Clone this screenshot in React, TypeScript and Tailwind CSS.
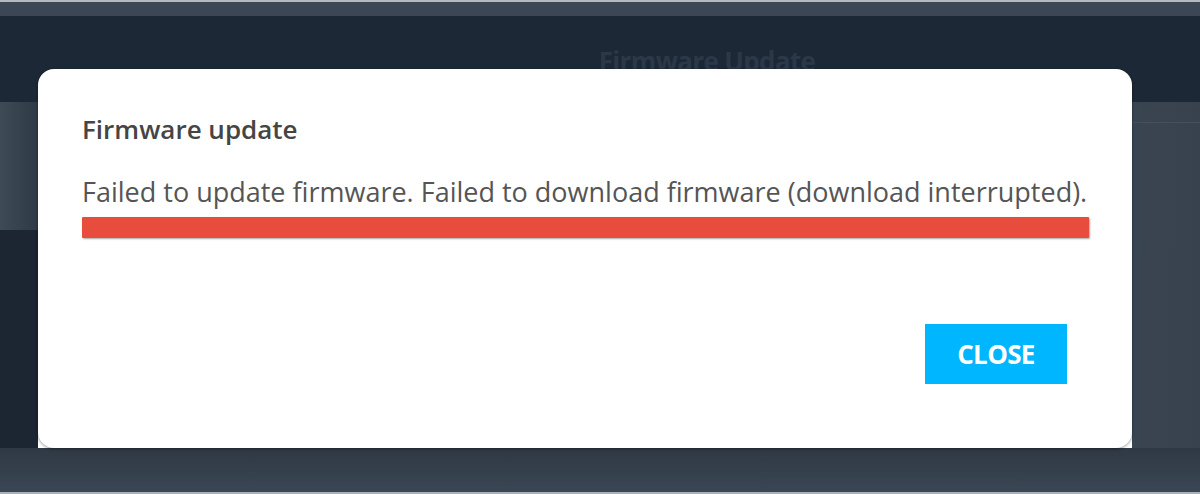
import React from "react";

const font = { fontFamily: '"Open Sans", "Liberation Sans", sans-serif' };

const App: React.FC = () => {
  return (
    <div className="relative w-[1200px] h-[494px] overflow-hidden flex flex-col" style={font}>
      {/* page behind the modal */}
      <div className="h-[2px] bg-[#b3b9c0]" />
      <div className="h-[14px] bg-[#3c4755]" />
      <div className="h-[86px] bg-[#1c2836] flex justify-center">
        <span className="ml-[214px] mt-[26px] text-[26px] font-bold text-[#2b3848] tracking-tight">Firmware Update</span>
      </div>
      <div className="flex-1 flex">
        <div className="w-[38px] flex flex-col">
          <div className="h-[128px] bg-gradient-to-r from-[#3f4a57] to-[#2f3a47]" />
          <div className="flex-1 bg-[#1c2532]" />
        </div>
        <div className="flex-1 bg-white" />
        <div className="w-[68px] flex flex-col bg-gradient-to-r from-[#3a4552] to-[#38424e]">
          <div className="h-[21px] border-b border-[#46505c]" />
        </div>
      </div>
      <div className="h-[44px] bg-gradient-to-b from-[#2f3945] to-[#3b4654]" />
      <div className="h-[2px] bg-[#aab1b8]" />

      {/* modal */}
      <div className="absolute left-[38px] top-[69px] w-[1094px] h-[379px] bg-white rounded-[16px] shadow-[0_1px_3px_rgba(0,0,0,0.4)] flex flex-col pl-[44px] pr-[43px]">
        <h2 className="mt-[45px] text-[26px] leading-[30px] font-semibold text-[#454545]">Firmware update</h2>
        <p className="mt-[32px] text-[27px] leading-[32px] text-[#555555] whitespace-nowrap">
          Failed to update firmware. Failed to download firmware (download interrupted).
        </p>
        <div className="mt-[9px] h-[21px] w-[1007px] bg-[#e74c3c] rounded-[1px] shadow-[1px_1px_2px_rgba(0,0,0,0.35)]" />
        <div className="flex justify-end mt-[86px] pr-[22px]">
          <button className="w-[142px] h-[60px] bg-[#00b6ff] text-white text-[26px] font-bold tracking-tight">
            CLOSE
          </button>
        </div>
      </div>
    </div>
  );
};

export default App;
